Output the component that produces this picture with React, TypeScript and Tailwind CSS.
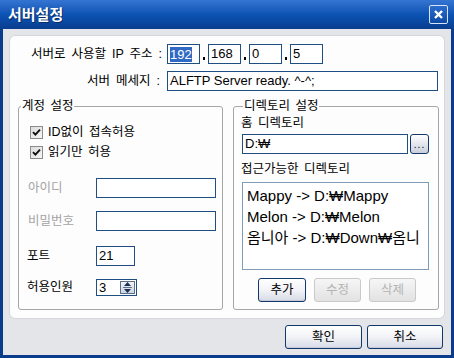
import React from "react";

const F = "font-['Liberation_Sans','Noto_Sans_CJK_KR',sans-serif]";

function Input({ w, children, className = "" }: { w: string; children?: React.ReactNode; className?: string }) {
  return (
    <div
      className={`${w} h-[20px] border border-[#1f4f82] bg-white flex items-center px-[2px] text-[13px] leading-[16px] text-black overflow-hidden whitespace-nowrap ${className}`}
    >
      {children}
    </div>
  );
}

function Check({ label }: { label: string }) {
  return (
    <div className="h-[20px] flex items-center">
      <div className="w-[13px] h-[13px] border border-[#8c8c8c] bg-gradient-to-br from-[#dcdcdc] to-[#f6f6f6] flex items-center justify-center ml-[11px]">
        <svg width="9" height="9" viewBox="0 0 9 9">
          <path d="M1 4.2 L3.4 6.6 L8 1.6" stroke="#111" strokeWidth="1.9" fill="none" />
        </svg>
      </div>
      <span className="ml-[5px] text-[12.5px] leading-[14px] [word-spacing:2px]">{label}</span>
    </div>
  );
}

function Btn({ label, w, disabled }: { label: string; w: string; disabled?: boolean }) {
  return disabled ? (
    <div
      className={`${w} h-[24px] rounded-[3px] border border-[#c9c9c9] bg-gradient-to-b from-[#f6f6f6] to-[#e2e2e2] flex items-center justify-center text-[12.5px] text-[#b3b3b3]`}
    >
      {label}
    </div>
  ) : (
    <div
      className={`${w} h-[24px] rounded-[3px] border border-[#12386b] bg-gradient-to-b from-[#ffffff] via-[#f2f3f7] to-[#d7dbe6] flex items-center justify-center text-[12.5px] text-black shadow-[inset_0_-1px_0_#c5cad8]`}
    >
      {label}
    </div>
  );
}

function Dot() {
  return (
    <div className="w-[8px] flex justify-center items-end h-[20px] pb-[4px]">
      <div className="w-[2px] h-[3px] bg-black" />
    </div>
  );
}

export default function App() {
  return (
    <div className={`w-[454px] h-[358px] flex flex-col bg-[#0b3c8c] ${F}`}>
      {/* title bar */}
      <div className="h-[29px] flex items-center justify-between px-[6px] bg-gradient-to-b from-[#3574d2] via-[#0b53b3] to-[#0a3e90]">
        <span className="text-white font-bold text-[15px] leading-[18px] ml-[2px] [text-shadow:1px_1px_0_#0a2a60]">서버설정</span>
        <div className="w-[19px] h-[19px] border border-[#d8e4f6] rounded-[2px] bg-gradient-to-b from-[#2a6ccd] to-[#0c4aa6] flex items-center justify-center">
          <svg width="11" height="11" viewBox="0 0 11 11">
            <path d="M2 2 L9 9 M9 2 L2 9" stroke="#fff" strokeWidth="2.4" />
          </svg>
        </div>
      </div>

      {/* body */}
      <div className="flex-1 mx-[3px] mb-[3px] bg-[#e4e5e9] flex flex-col px-[7px] pt-[7px]">
        {/* white panel */}
        <div className="h-[282px] bg-[#fdfdfd] rounded-[5px] shadow-[0_0_0_1px_#d6d7dc] flex flex-col pt-[8px] text-[12.5px] text-black">
          {/* IP row */}
          <div className="flex items-center h-[20px]">
            <div className="w-[152px] text-right text-[12.5px] leading-[14px] [word-spacing:2.5px]">서버로 사용할 IP 주소 :</div>
            <div className="ml-[5px] flex items-center">
              <Input w="w-[33px]">
                <span className="bg-[#316ac5] text-white leading-[15px]">192</span>
              </Input>
              <Dot />
              <Input w="w-[33px]">168</Input>
              <Dot />
              <Input w="w-[33px]">0</Input>
              <Dot />
              <Input w="w-[33px]">5</Input>
            </div>
          </div>

          {/* message row */}
          <div className="flex items-center h-[20px] mt-[7px]">
            <div className="w-[150px] text-right text-[12.5px] leading-[14px] [word-spacing:2.5px]">서버 메세지 :</div>
            <Input w="w-[271px] ml-[7px]">ALFTP Server ready. ^-^;</Input>
          </div>

          {/* groups */}
          <div className="flex mt-[8px] ml-[8px] gap-[10px]">
            {/* left group */}
            <fieldset className="w-[205px] h-[211px] border border-[#a6a6a6] rounded-[3px] px-0 pt-[9px]">
              <legend className="ml-[2px] px-[1px] text-[12.5px] leading-[14px] [word-spacing:2px]">계정 설정</legend>
              <Check label="ID없이 접속허용" />
              <Check label="읽기만 허용" />

              <div className="flex items-center h-[20px] mt-[16px]">
                <span className="w-[77px] pl-[9px] text-[#a3a3a3] text-[12.5px]">아이디</span>
                <Input w="w-[120px]" />
              </div>
              <div className="flex items-center h-[20px] mt-[13px]">
                <span className="w-[77px] pl-[9px] text-[#a3a3a3] text-[12.5px]">비밀번호</span>
                <Input w="w-[120px]" />
              </div>
              <div className="flex items-center h-[20px] mt-[15px]">
                <span className="w-[77px] pl-[8px] text-[12.5px]">포트</span>
                <Input w="w-[39px]">21</Input>
              </div>
              <div className="flex items-center h-[17px] mt-[13px]">
                <span className="w-[77px] pl-[8px] text-[12.5px]">허용인원</span>
                <div className="w-[41px] h-[17px] border border-[#1f4f82] bg-white flex items-center">
                  <span className="flex-1 pl-[2px] text-[13px] leading-[15px]">3</span>
                  <div className="w-[15px] h-[13px] mr-[1px] border border-[#5a6f8c] bg-gradient-to-b from-[#eef1f7] to-[#cfd6e4] flex flex-col items-center justify-center gap-[1px]">
                    <svg width="7" height="4" viewBox="0 0 7 4">
                      <path d="M0 4 L3.5 0 L7 4 Z" fill="#1d2f4c" />
                    </svg>
                    <div className="w-[9px] h-[1px] bg-[#5a6f8c]" />
                    <svg width="7" height="4" viewBox="0 0 7 4">
                      <path d="M0 0 L3.5 4 L7 0 Z" fill="#1d2f4c" />
                    </svg>
                  </div>
                </div>
              </div>
            </fieldset>

            {/* right group */}
            <fieldset className="w-[206px] h-[211px] border border-[#a6a6a6] rounded-[3px] pl-[7px] pt-[3px]">
              <legend className="ml-[2px] px-[1px] text-[12.5px] leading-[14px] [word-spacing:2px]">디렉토리 설정</legend>
              <div className="h-[15px] text-[12.5px] leading-[15px] [word-spacing:2px]">홈 디렉토리</div>
              <div className="flex items-center mt-[3px]">
                <Input w="w-[166px] ml-[1px]">D:₩</Input>
                <div className="ml-[2px] w-[19px] h-[20px] rounded-[3px] border border-[#12386b] bg-gradient-to-b from-[#ffffff] to-[#c9cfdc] flex items-end justify-center pb-[4px]">
                  <span className="text-[10px] leading-[8px] tracking-[1px]">...</span>
                </div>
              </div>
              <div className="h-[15px] text-[12.5px] leading-[15px] mt-[8px] [word-spacing:2px]">접근가능한 디렉토리</div>
              <div className="ml-[1px] mt-[5px] w-[187px] h-[88px] border border-[#7f9db9] bg-white pl-[4px] pt-[2px] text-[15px] leading-[21px] whitespace-nowrap overflow-hidden">
                <div>Mappy -&gt; D:₩Mappy</div>
                <div>Melon -&gt; D:₩Melon</div>
                <div>옴니아 -&gt; D:₩Down₩옴니</div>
              </div>
              <div className="flex ml-[17px] mt-[8px] gap-[8px]">
                <Btn label="추가" w="w-[48px]" />
                <Btn label="수정" w="w-[47px]" disabled />
                <Btn label="삭제" w="w-[47px]" disabled />
              </div>
            </fieldset>
          </div>
        </div>

        {/* bottom buttons */}
        <div className="flex justify-end gap-[5px] mt-[7px] mr-[1px]">
          <Btn label="확인" w="w-[77px]" />
          <Btn label="취소" w="w-[76px]" />
        </div>
      </div>
    </div>
  );
}
